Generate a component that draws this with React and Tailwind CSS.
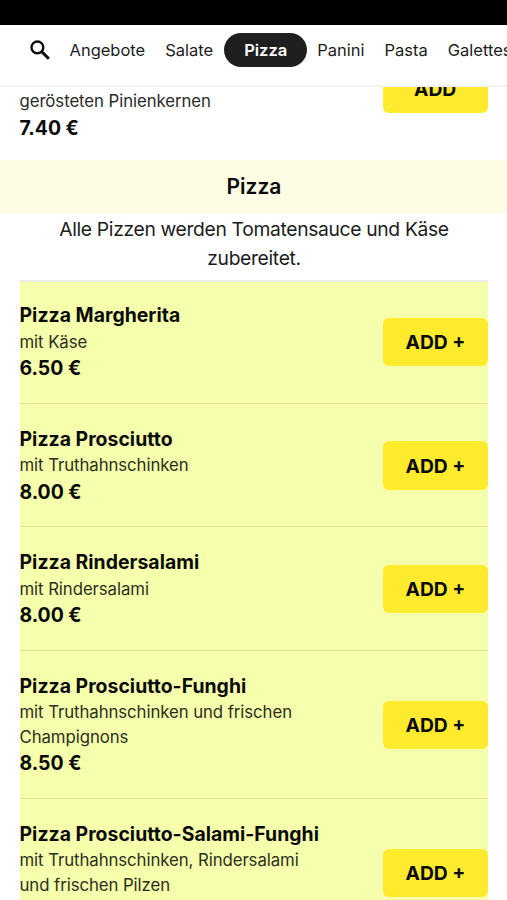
const categories = [
  { name: 'Angebote' },
  { name: 'Salate' },
  { name: 'Pizza', active: true },
  { name: 'Panini' },
  { name: 'Pasta' },
  { name: 'Galettes' },
];

const pizzas = [
  { name: 'Pizza Margherita', text: ['mit Käse'], price: '6.50 €' },
  { name: 'Pizza Prosciutto', text: ['mit Truthahnschinken'], price: '8.00 €' },
  { name: 'Pizza Rindersalami', text: ['mit Rindersalami'], price: '8.00 €' },
  { name: 'Pizza Prosciutto-Funghi', text: ['mit Truthahnschinken und frischen', 'Champignons'], price: '8.50 €' },
  { name: 'Pizza Prosciutto-Salami-Funghi', text: ['mit Truthahnschinken, Rindersalami', 'und frischen Pilzen'] },
];

function SearchIcon() {
  return (
    <svg viewBox="0 0 20 20" className="h-5 w-5 shrink-0" fill="none" stroke="#0c0c0c">
      <circle cx="7.4" cy="7.4" r="5.9" strokeWidth="2.4" />
      <path d="M11.8 11.8L18.8 18.8" strokeWidth="3" />
    </svg>
  );
}

function AddButton({ label = 'ADD +' }) {
  return (
    <button className="h-[48.5px] w-[105px] shrink-0 rounded-[6px] bg-[#ffeb2e] pt-px pl-[23px] text-left text-[19.3px] font-bold whitespace-nowrap text-[#0b0b0b]">
      {label}
    </button>
  );
}

function Item({ name, text, price }) {
  return (
    <li className="flex items-center justify-between border-b border-[#dbe398] pt-[20.7px] pb-[19.8px] first:-mt-px">
      <div className="whitespace-nowrap">
        <h3 className="text-[19.4px] leading-[28.5px] font-bold tracking-[0.03px]">{name}</h3>
        {text.map((line) => (
          <p key={line} className="text-[16.8px] leading-[24.5px] tracking-[-0.08px] text-[#2c2e20]">{line}</p>
        ))}
        <p className="h-[29px] text-[19.4px] leading-[29px] font-bold">{price}</p>
      </div>
      <AddButton />
    </li>
  );
}

export default function App() {
  return (
    <div className="flex h-[900px] w-[507px] flex-col overflow-hidden bg-white font-['Inter',sans-serif] text-[#0b0b0b]">
      <div className="h-[25px] shrink-0 bg-black" />
      <nav className="flex h-[62px] shrink-0 items-start overflow-hidden border-b-2 border-[#f3f3f3] pt-2 pl-[30px]">
        <div className="flex h-[34px] items-center text-[16.5px] whitespace-nowrap text-[#1c1c1c]">
          <SearchIcon />
          <div className="ml-[19.5px] flex h-full items-center">
            {categories.map((c) =>
              c.active ? (
                <span key={c.name} className="mr-[10.5px] -ml-[9.5px] flex h-full w-[83px] shrink-0 items-center justify-center rounded-full bg-[#1f1f1f] pt-px pl-px font-semibold text-white">
                  {c.name}
                </span>
              ) : (
                <span key={c.name} className="mr-5 pt-px">{c.name}</span>
              )
            )}
          </div>
        </div>
      </nav>
      <div className="flex h-[73px] shrink-0 items-start justify-between overflow-hidden px-[19.5px]">
        <div className="pt-[2.4px]">
          <p className="text-[16.8px] leading-[24.5px] tracking-[-0.08px] text-[#2b2b2b]">gerösteten Pinienkernen</p>
          <p className="pt-[0.5px] text-[19.4px] leading-[29px] font-bold">7.40 €</p>
        </div>
        <div className="-mt-[22.5px] flex *:pl-[31.5px]">
          <AddButton label="ADD" />
        </div>
      </div>
      <h2 className="flex h-[53px] shrink-0 items-center justify-center bg-[#fffce6] pl-px text-[21px] font-semibold">Pizza</h2>
      <p className="h-[66.5px] shrink-0 pt-[1.5px] pl-px text-center text-[19.3px] leading-[29.3px] tracking-[-0.34px] text-[#1c1c1c]">
        Alle Pizzen werden Tomatensauce und Käse<br />zubereitet.
      </p>
      <ul className="mx-[19.5px] shrink-0 border-t-2 border-[#ececec] bg-[#f6ffab]">
        {pizzas.map((p) => <Item key={p.name} {...p} />)}
      </ul>
    </div>
  );
}
